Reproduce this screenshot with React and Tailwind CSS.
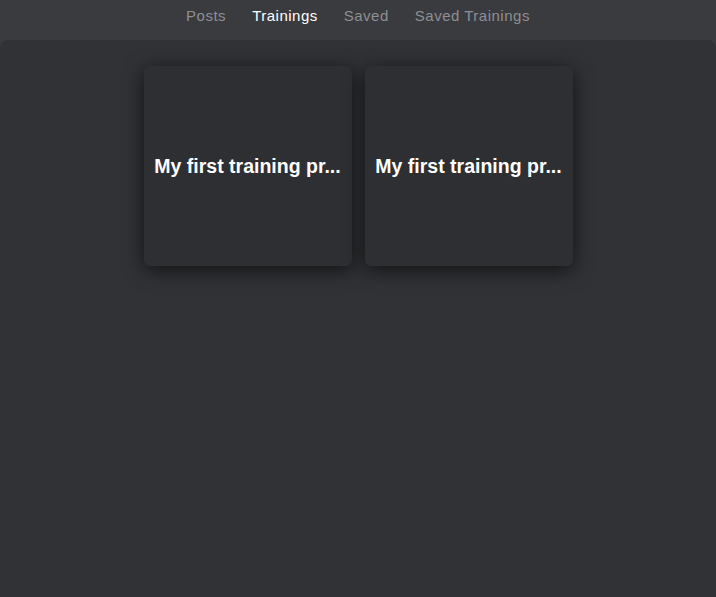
import React from "react";

const tabs = [
  { label: "Posts", active: false },
  { label: "Trainings", active: true },
  { label: "Saved", active: false },
  { label: "Saved Trainings", active: false },
];

const trainings = [
  { id: 1, title: "My first training program" },
  { id: 2, title: "My first training program" },
];

const shorten = (s) => (s.length > 20 ? s.slice(0, 20) + "..." : s);

export default function App() {
  return (
    <div className="min-h-[597px] flex flex-col bg-[#3a3b3f] font-['Liberation_Sans',Arial,sans-serif]">
      {/* Tabs */}
      <nav className="h-10 flex items-start justify-center gap-[26px] pt-[7px]">
        {tabs.map((tab) => (
          <button
            key={tab.label}
            className={`text-[15px] leading-[18px] tracking-[0.5px] ${
              tab.active ? "text-white" : "text-[#8e8f93]"
            }`}
          >
            {tab.label}
          </button>
        ))}
      </nav>

      {/* Content */}
      <main className="flex-1 bg-[#313236] rounded-t-lg pt-[26px]">
        <div className="flex justify-center gap-[13px]">
          {trainings.map((t) => (
            <div
              key={t.id}
              className="w-[208px] h-[200px] bg-[#2e2f33] rounded-md shadow-[0_4px_20px_rgba(0,0,0,0.65)] flex items-center justify-center"
            >
              <h3 className="text-center text-white font-bold text-[19.5px] leading-6 whitespace-nowrap">
                {shorten(t.title)}
              </h3>
            </div>
          ))}
        </div>
      </main>
    </div>
  );
}
